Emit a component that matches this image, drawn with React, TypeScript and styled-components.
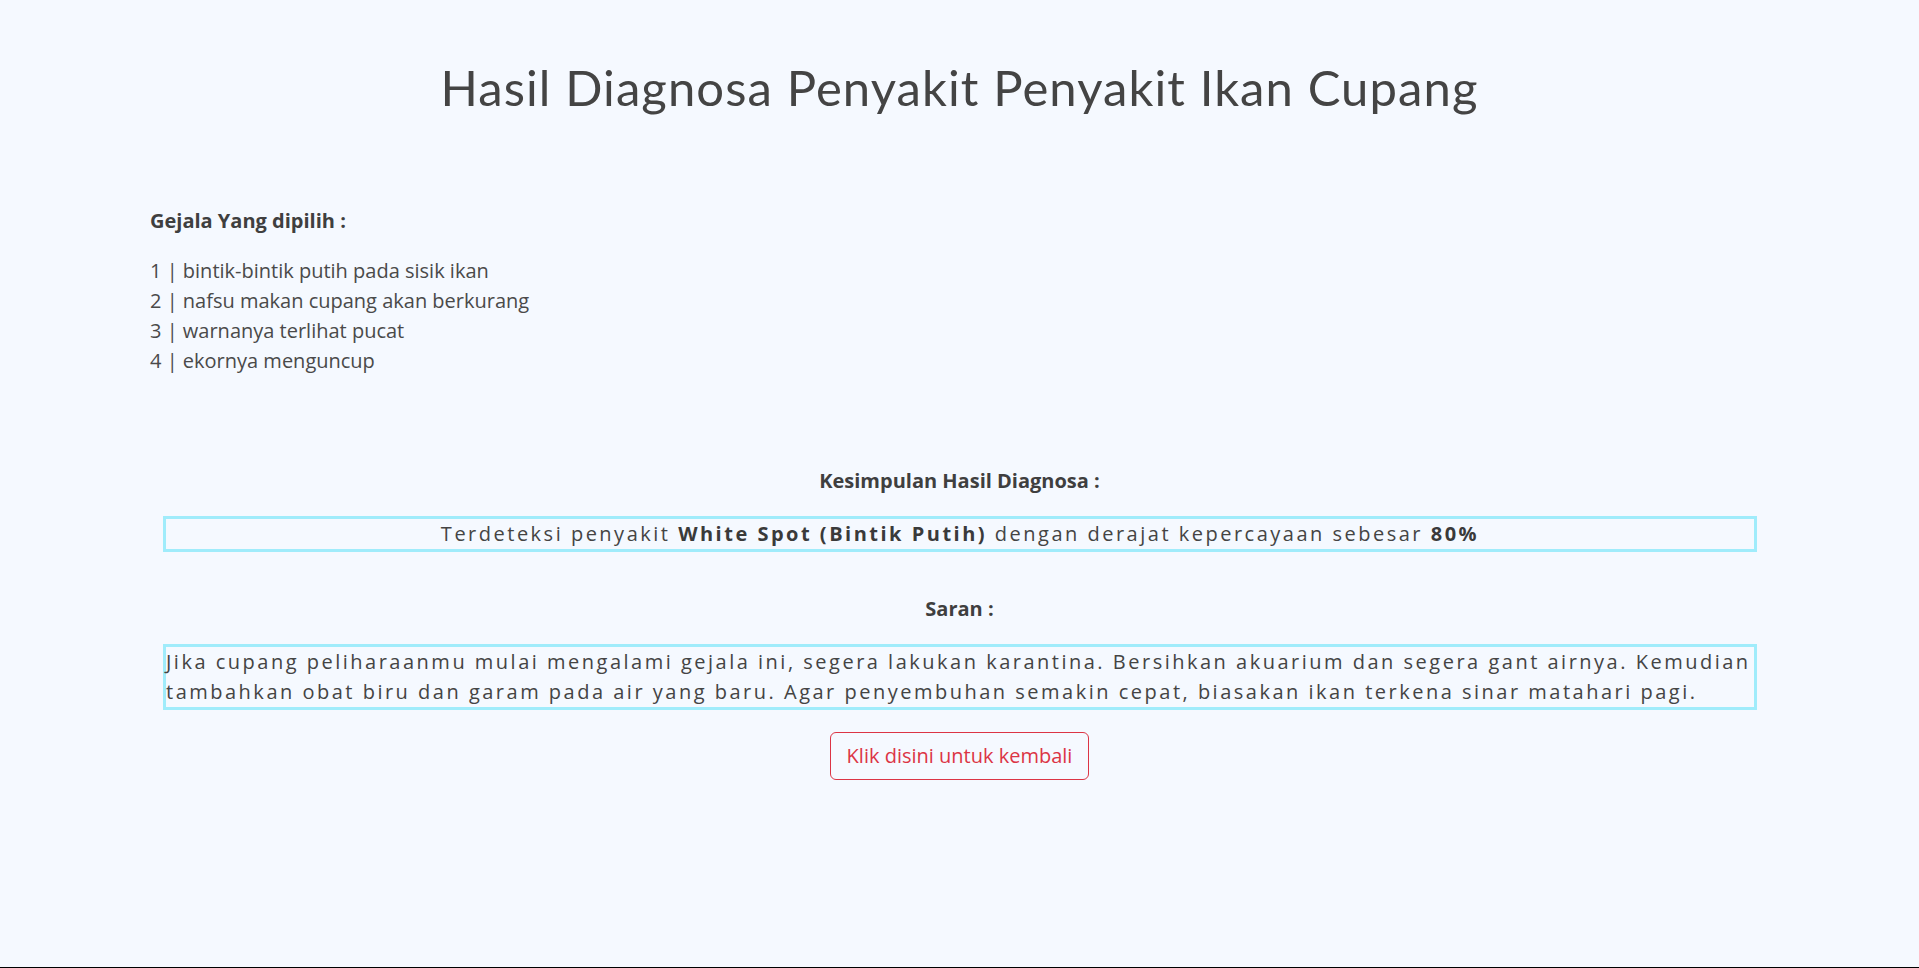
import React from "react";
import styled, { createGlobalStyle } from "styled-components";

const GlobalStyle = createGlobalStyle`
  html, body {
    margin: 0;
    padding: 0;
    background: #f5f9ff;
  }
  body {
    font-family: "Open Sans", "Liberation Sans", sans-serif;
    color: #444;
  }
`;

const Page = styled.div`
  min-height: 968px;
  box-sizing: border-box;
  display: flex;
  flex-direction: column;
  background: #f5f9ff;
  border-bottom: 1px solid #000;
`;

const Title = styled.h1`
  margin: 58px 0 0;
  font-family: "Lato", "Nunito", sans-serif;
  font-weight: 400;
  font-size: 49px;
  line-height: 58px;
  letter-spacing: 1.1px;
  color: #444;
  text-align: center;
`;

const Content = styled.section`
  display: flex;
  flex-direction: column;
  padding: 0 150px;
`;

const Heading = styled.h4<{ $center?: boolean; $top: number }>`
  margin: ${(p) => p.$top}px 0 0;
  font-size: 20px;
  line-height: 24px;
  font-weight: 700;
  color: #3f3f3f;
  text-align: ${(p) => (p.$center ? "center" : "left")};
`;

const List = styled.div`
  margin-top: 23px;
  display: flex;
  flex-direction: column;
`;

const Item = styled.div`
  font-size: 20px;
  line-height: 30px;
  color: #4a4a4a;
`;

const Box = styled.div<{ $center?: boolean; $top: number }>`
  margin: ${(p) => p.$top}px 12px 0 13px;
  border: 3px solid #a0ecfb;
  font-size: 20px;
  line-height: 30px;
  letter-spacing: 2.5px;
  color: #444;
  text-align: ${(p) => (p.$center ? "center" : "left")};
  b {
    font-weight: 700;
    color: #3a3a3a;
  }
`;

const ButtonRow = styled.div`
  display: flex;
  justify-content: center;
  margin-top: 22px;
`;

const BackButton = styled.a`
  display: inline-block;
  padding: 8px 16px;
  font-size: 20px;
  line-height: 30px;
  color: #dc3545;
  border: 1px solid #dc3545;
  border-radius: 6px;
  text-decoration: none;
  cursor: pointer;
  background: transparent;
`;

const gejala = [
  "bintik-bintik putih pada sisik ikan",
  "nafsu makan cupang akan berkurang",
  "warnanya terlihat pucat",
  "ekornya menguncup",
];

export default function App() {
  return (
    <>
      <GlobalStyle />
      <Page>
        <Title>Hasil Diagnosa Penyakit Penyakit Ikan Cupang</Title>
        <Content>
          <Heading $top={93}>Gejala Yang dipilih :</Heading>
          <List>
            {gejala.map((g, i) => (
              <Item key={i}>
                {i + 1} | {g}
              </Item>
            ))}
          </List>
          <Heading $center $top={93}>
            Kesimpulan Hasil Diagnosa :
          </Heading>
          <Box $center $top={23}>
            Terdeteksi penyakit <b>White Spot (Bintik Putih)</b> dengan derajat
            kepercayaan sebesar <b>80%</b>
          </Box>
          <Heading $center $top={45}>
            Saran :
          </Heading>
          <Box $top={23}>
            Jika cupang peliharaanmu mulai mengalami gejala ini, segera lakukan
            karantina. Bersihkan akuarium dan segera gant airnya. Kemudian
            tambahkan obat biru dan garam pada air yang baru. Agar penyembuhan
            semakin cepat, biasakan ikan terkena sinar matahari pagi.
          </Box>
          <ButtonRow>
            <BackButton>Klik disini untuk kembali</BackButton>
          </ButtonRow>
        </Content>
      </Page>
    </>
  );
}
